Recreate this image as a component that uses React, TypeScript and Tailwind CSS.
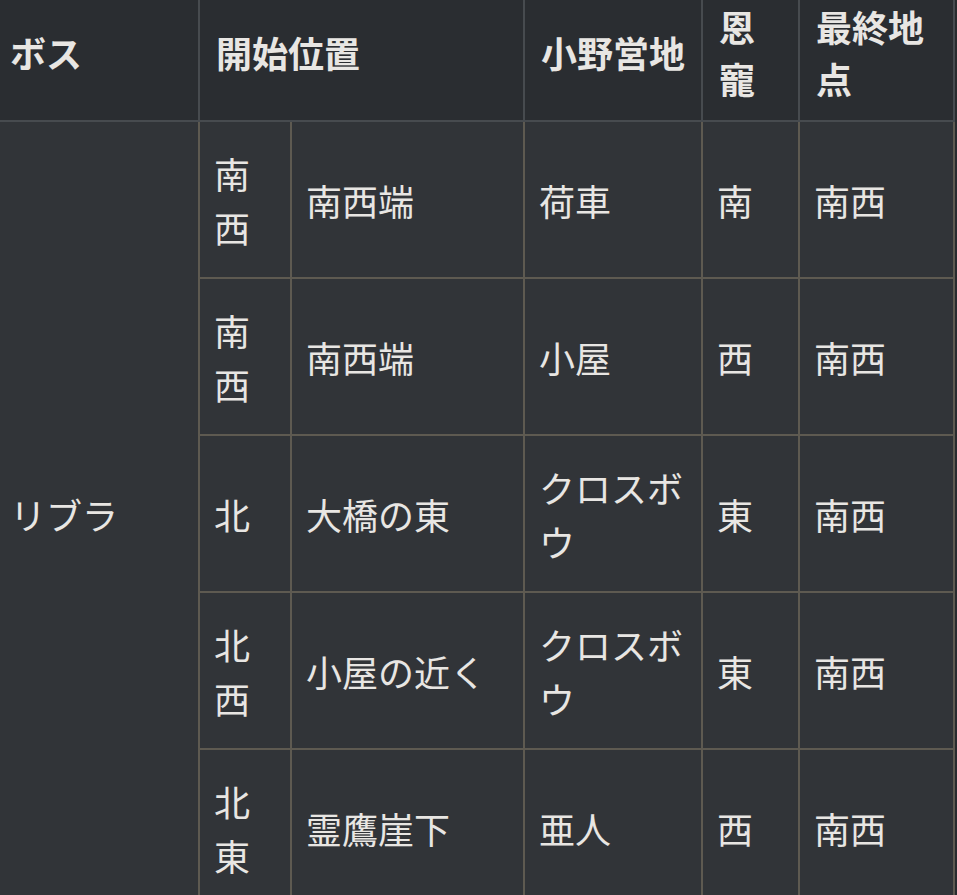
import React from "react";

type Row = { dir: string[]; start: string; camp: string[]; grace: string; end: string };

const rows: Row[] = [
  { dir: ["南", "西"], start: "南西端", camp: ["荷車"], grace: "南", end: "南西" },
  { dir: ["南", "西"], start: "南西端", camp: ["小屋"], grace: "西", end: "南西" },
  { dir: ["北"], start: "大橋の東", camp: ["クロスボ", "ウ"], grace: "東", end: "南西" },
  { dir: ["北", "西"], start: "小屋の近く", camp: ["クロスボ", "ウ"], grace: "東", end: "南西" },
  { dir: ["北", "東"], start: "霊鷹崖下", camp: ["亜人"], grace: "西", end: "南西" },
];

function Lines({ parts }: { parts: string[] }) {
  return (
    <>
      {parts.map((p, i) => (
        <React.Fragment key={i}>
          {i > 0 && <br />}
          {p}
        </React.Fragment>
      ))}
    </>
  );
}

const th =
  "h-[122px] border-r-2 border-b-2 border-[#474b4f] bg-[#2a2d31] pt-0 pb-[16px] px-[16px] text-left align-middle font-bold text-[36px] leading-[52px] whitespace-nowrap";
const td =
  "h-[157px] border-r-2 border-b-2 border-[#5e5a51] bg-[#313438] px-[14px] py-0 text-left align-middle font-normal text-[36px] leading-[54px] whitespace-nowrap";

export default function App() {
  return (
    <div className="min-h-screen w-full overflow-hidden bg-[#282b2e] font-['Noto_Sans_CJK_JP','Noto_Sans',sans-serif] text-[#e8e6e3]">
      <table className="table-fixed border-separate border-spacing-0 w-[955px]">
        <colgroup>
          <col className="w-[200px]" />
          <col className="w-[92px]" />
          <col className="w-[233px]" />
          <col className="w-[178px]" />
          <col className="w-[97px]" />
          <col className="w-[155px]" />
        </colgroup>
        <thead>
          <tr>
            <th className={th + " pl-[10px]"}>ボス</th>
            <th className={th} colSpan={2}>
              開始位置
            </th>
            <th className={th}>小野営地</th>
            <th className={th}>
              恩<br />寵
            </th>
            <th className={th}>
              最終地<br />点
            </th>
          </tr>
        </thead>
        <tbody>
          {rows.map((r, i) => (
            <tr key={i}>
              {i === 0 && (
                <td className={td + " pl-[10px]"} rowSpan={5}>
                  リブラ
                </td>
              )}
              <td className={td}>
                <Lines parts={r.dir} />
              </td>
              <td className={td}>{r.start}</td>
              <td className={td}>
                <Lines parts={r.camp} />
              </td>
              <td className={td}>{r.grace}</td>
              <td className={td}>{r.end}</td>
            </tr>
          ))}
        </tbody>
      </table>
    </div>
  );
}
